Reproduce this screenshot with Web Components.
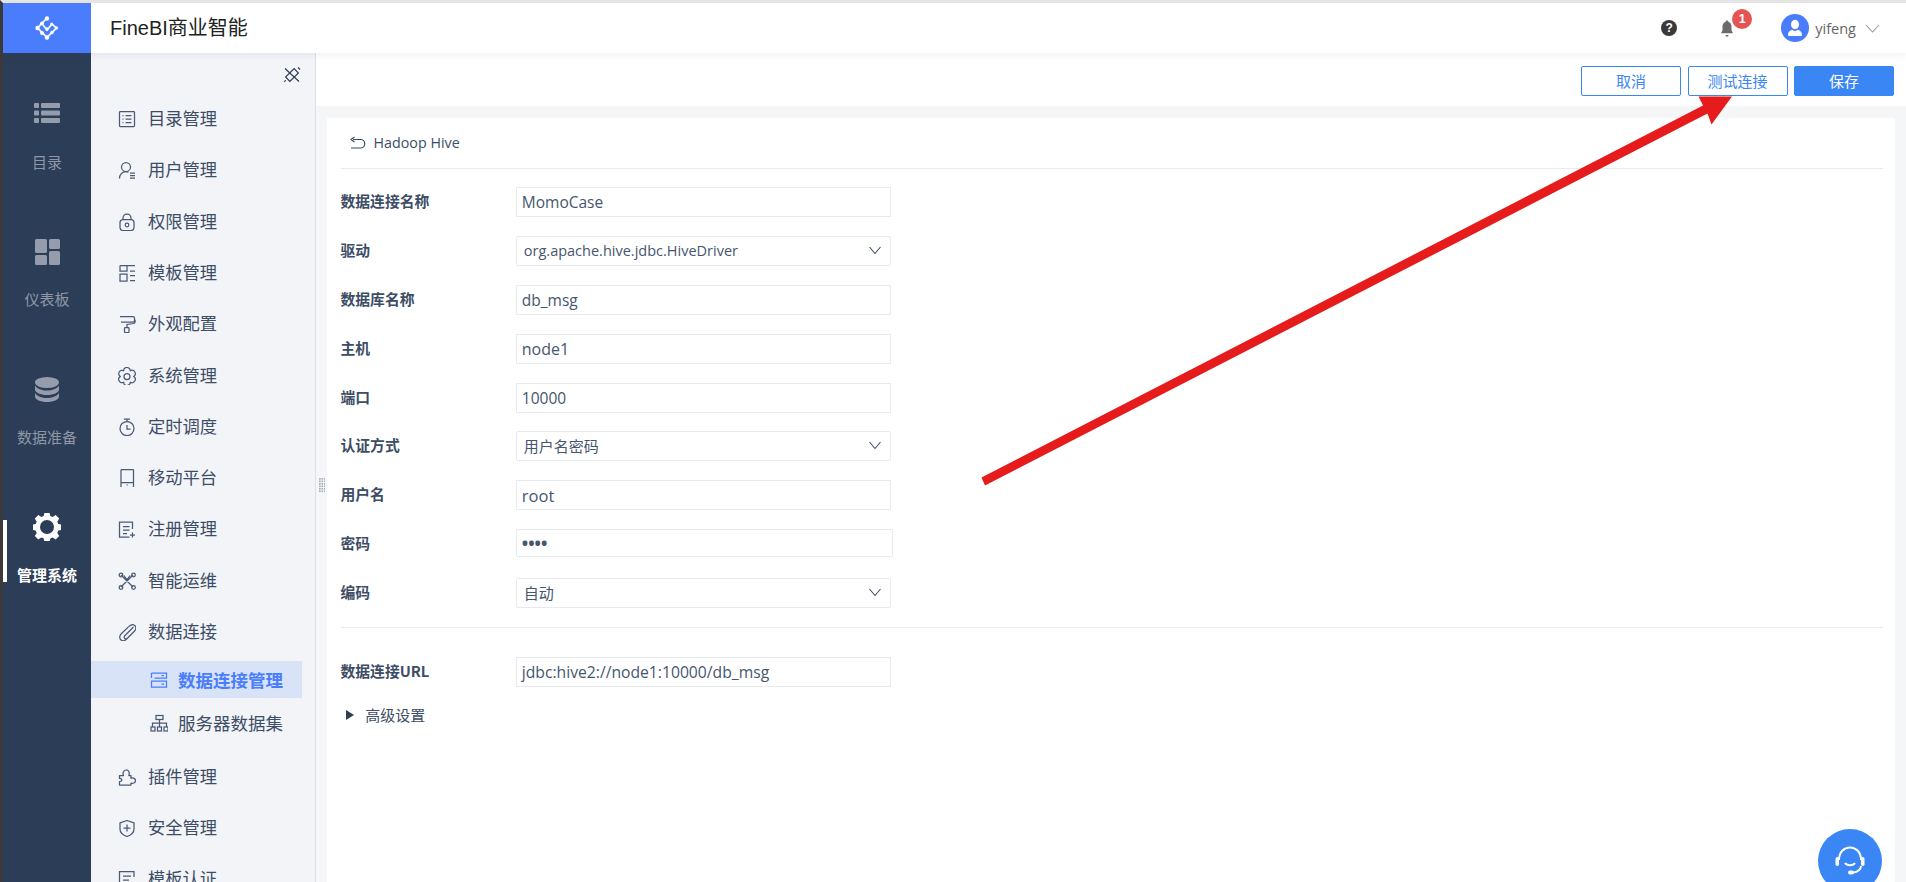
<!DOCTYPE html>
<html lang="zh"><head><meta charset="utf-8"><title>FineBI</title>
<style>
html,body{margin:0;height:100%;overflow:hidden;background:#fff}
body{font-family:"Open Sans","Noto Sans CJK SC",sans-serif;color:#3d4d66}
</style></head>
<body>
<bi-app>
  <bi-header slot="header" title-text="FineBI商业智能" user="yifeng" count="1"></bi-header>
  <bi-rail slot="rail">
    <rail-item icon="list">目录</rail-item>
    <rail-item icon="dash">仪表板</rail-item>
    <rail-item icon="db">数据准备</rail-item>
    <rail-item icon="gear" active>管理系统</rail-item>
  </bi-rail>
  <bi-nav slot="nav">
    <nav-item icon="catalog">目录管理</nav-item>
    <nav-item icon="user">用户管理</nav-item>
    <nav-item icon="lock">权限管理</nav-item>
    <nav-item icon="tpl">模板管理</nav-item>
    <nav-item icon="roller">外观配置</nav-item>
    <nav-item icon="cog">系统管理</nav-item>
    <nav-item icon="timer">定时调度</nav-item>
    <nav-item icon="mobile">移动平台</nav-item>
    <nav-item icon="reg">注册管理</nav-item>
    <nav-item icon="ops">智能运维</nav-item>
    <nav-item icon="clip">数据连接</nav-item>
    <nav-sub icon="server" active>数据连接管理</nav-sub>
    <nav-sub icon="tree">服务器数据集</nav-sub>
    <nav-item icon="puzzle" style="margin-top:9px">插件管理</nav-item>
    <nav-item icon="shield">安全管理</nav-item>
    <nav-item icon="cert">模板认证</nav-item>
  </bi-nav>
  <bi-main slot="main">
    <fine-btn slot="actions">取消</fine-btn>
    <fine-btn slot="actions">测试连接</fine-btn>
    <fine-btn slot="actions" primary>保存</fine-btn>
    <conn-form slot="body" heading="Hadoop Hive">
      <form-row label="数据连接名称" value="MomoCase"></form-row>
      <form-row label="驱动" value="org.apache.hive.jdbc.HiveDriver" select fs="14.5"></form-row>
      <form-row label="数据库名称" value="db_msg"></form-row>
      <form-row label="主机" value="node1" fs="16"></form-row>
      <form-row label="端口" value="10000"></form-row>
      <form-row label="认证方式" value="用户名密码" select fs="15"></form-row>
      <form-row label="用户名" value="root" fs="16.5"></form-row>
      <form-row label="密码" value="••••" secret fs="17"></form-row>
      <form-row label="编码" value="自动" select fs="15"></form-row>
      <form-row slot="url" label="数据连接URL" value="jdbc:hive2://node1:10000/db_msg" fs="15.7"></form-row>
    </conn-form>
  </bi-main>
</bi-app>
<script>
function flower(cx,cy,r,n,lobe){let d='';for(let i=0;i<n;i++){const a=2*Math.PI*i/n-Math.PI/n-Math.PI/2,x=(cx+r*Math.cos(a)).toFixed(2),y=(cy+r*Math.sin(a)).toFixed(2);d+=(i?'A'+lobe+' '+lobe+' 0 0 1 ':'M')+x+' '+y;}return d+'A'+lobe+' '+lobe+' 0 0 1 '+(cx+r*Math.cos(-Math.PI/n-Math.PI/2)).toFixed(2)+' '+(cy+r*Math.sin(-Math.PI/n-Math.PI/2)).toFixed(2)+'z';}
const ICONS={
 list:'<g fill="currentColor"><rect x="1" y="2" width="5" height="5" rx="1"/><rect x="8" y="2" width="19" height="5" rx="1"/><rect x="1" y="9.5" width="5" height="5" rx="1"/><rect x="8" y="9.5" width="19" height="5" rx="1"/><rect x="1" y="17" width="5" height="5" rx="1"/><rect x="8" y="17" width="19" height="5" rx="1"/></g>',
 dash:'<g fill="currentColor"><rect x="2" y="1" width="12" height="14" rx="1.5"/><rect x="16" y="1" width="11" height="10" rx="1.5"/><rect x="2" y="17" width="12" height="10" rx="1.5"/><rect x="16" y="13" width="11" height="14" rx="1.5"/></g>',
 db:'<g fill="currentColor"><ellipse cx="14" cy="6.5" rx="12" ry="5.5"/><path d="M2 9.5c2 3.400 7 5 12 5s10-1.600 12-5v4c0 3-5.400 5.500-12 5.500S2 16.500 2 13.500z"/><path d="M2 17c2 3.400 7 5 12 5s10-1.600 12-5v3.500C26 23.500 20.600 26 14 26S2 23.500 2 20.500z"/></g>',
 gear:'<path fill="currentColor" fill-rule="evenodd" d="M11.500 1h5l.8 3.500 2.300 1 3.100-1.900 3.500 3.500-1.900 3.100 1 2.300 3.500.8v5l-3.500.8-1 2.300 1.900 3.100-3.500 3.500-3.100-1.900-2.300 1-.8 3.500h-5l-.8-3.500-2.300-1-3.100 1.900-3.500-3.500 1.900-3.100-1-2.300-3.500-.8v-5l3.500-.8 1-2.300-1.900-3.100 3.500-3.500 3.100 1.900 2.300-1zM14 8.500a7 7 0 1 0 0 14 7 7 0 0 0 0-14z" transform="translate(0 -1.500)"/>',
 catalog:'<rect x="1.500" y="1.500" width="15" height="15" rx=".8"/><path d="M4.500 5.500h1M7.500 5.500h6M4.500 9h1M7.500 9h6M4.500 12.500h1M7.500 12.500h6"/>',
 user:'<circle cx="8" cy="6" r="4.500"/><path d="M1.500 17.500c0-4 2.500-6.800 6.500-6.800 1 0 1.800.2 2.500.5M12 12h5M12 14.500h5M12 17h5"/>',
 lock:'<rect x="2" y="6.500" width="14" height="11" rx="3"/><path d="M5 6.500V5a4 4 0 0 1 8 0v1.500"/><circle cx="9" cy="12" r="1.800"/>',
 tpl:'<path d="M2 1.500h15M2 1.500v5.500h7V1.500M2 10h7v7H2zM12 7h5M12 11.500h5M12 16.500h5"/>',
 roller:'<path d="M2 1.500h13a1.500 1.500 0 0 1 1.500 1.500v2.500A1.500 1.500 0 0 1 15 7H3M16.500 4.500c1 1 1 3-.5 4l-7 1v3"/><rect x="6.500" y="12.500" width="4.500" height="5" rx=".8"/>',
 cog:`<path d="${flower(9,9.5,6.600,6,3.300)}" stroke-linejoin="round"/><circle cx="9" cy="9.500" r="3"/>`,
 timer:'<circle cx="9" cy="10.500" r="7"/><path d="M6 1.200h6M9 1.200V3.500M9 7v4h3.500"/>',
 mobile:'<rect x="3" y="0.500" width="12.500" height="18" rx="1"/><path d="M3 13.500h12.500M9.200 15.600v1"/>',
 reg:'<path d="M14.500 9V2H1.500v15h10M5 6.500h6.500M5 10h6.500M5 13.500h4M12 15h5M14.500 12.500v5"/>',
 ops:'<path d="M3 3l12 12M15 3L3 15M6 3.500c1 1.500 1 2 3 4M12 3.500c-1 1.500-1 2-3 4"/><circle cx="3" cy="3" r="1.800"/><circle cx="15.500" cy="3" r="1.800"/><circle cx="3" cy="15.500" r="1.800"/><circle cx="15.500" cy="15.500" r="1.800"/>',
 clip:'<path d="M15.500 4L7 12.500c-1.200 1.200-1 2.300-.4 2.900.7.700 1.900.6 3-.4l6.500-6.500c2.200-2.200 2-4.500.8-5.800-1.300-1.300-3.700-1.500-5.900.7L3.500 10.500c-2.500 2.500-2 5-.7 6.200 1.300 1.200 3.600 1.500 5.600-.5l6-6"/>',
 server:'<path d="M1.500 2h15v5H4.500M1.500 2v5M16.500 10h-15v6h15zM11.500 4.500H14M11.500 13H14"/>',
 tree:'<rect x="6" y="1.500" width="7" height="4"/><path d="M9.500 5.500V9M2.500 13V9h14v4M9.500 9v4"/><rect x="1" y="13" width="4" height="4"/><rect x="7.500" y="13" width="4" height="4"/><rect x="14" y="13" width="4" height="4"/>',
 puzzle:'<path d="M1.500 17v-3.500c2 0 2.500-1 2.200-2-.3-.9-1.200-1.200-2.200-1V7.500h4c-1-2-.5-5 2.500-5.500 2.500-.3 4 2.500 2.800 5.500h2.200v2.700c2-.8 4.500.3 4.500 2.500 0 2.300-2.500 3-4.500 2.500V17z" stroke-linejoin="round"/>',
 shield:'<path d="M9 1.500l7 2.400v6.100c0 3.500-3.500 6.300-7 7.500-3.500-1.200-7-4-7-7.500V3.900z" stroke-linejoin="round"/><path d="M5.500 9h7M9 5.500v7"/>',
 cert:'<path d="M16 7V1.500H1.500v15h8M5 6h8M5 10h6"/>'
};
function def(name,build){
  class C extends HTMLElement{
    constructor(){super();this.attachShadow({mode:'open'});}
    connectedCallback(){this.shadowRoot.innerHTML=build(this);}
  }
  customElements.define(name,C);
}
const ic=(n,s=18,vb=18)=>`<svg width="${s}" height="${s}" viewBox="0 0 ${vb} ${vb}" fill="none" stroke="currentColor" stroke-width="1.250">${ICONS[n]}</svg>`;

def('bi-app',()=>`<style>
:host{display:grid;grid-template-columns:88px 225px 1fr;grid-template-rows:50px 1fr;width:1906px;height:882px;box-sizing:border-box;border-top:3px solid #e4e4e4;border-left:3px solid #3a3a3a;overflow:hidden;position:relative;background:#fff}
::slotted([slot=header]){grid-column:1/-1}
svg.arrow{position:absolute;left:-3px;top:-3px;pointer-events:none;z-index:1}
</style><slot name="header"></slot><slot name="rail"></slot><slot name="nav"></slot><slot name="main"></slot>
<svg class="arrow" width="1906" height="882" viewBox="0 0 1906 882"><path fill="#e61b1b" d="M981.500 477.500L1703 105.500 1698.500 96.500H1732L1711.500 124.500 1707.500 113.500 985 485.500z"/></svg>`);

def('bi-header',h=>`<style>
:host{display:flex;align-items:center;height:50px;background:#fff;box-shadow:0 2px 8px rgba(60,70,90,.08);position:relative;z-index:3}
.logo{width:88px;height:50px;background:#4a7dfc;display:flex;align-items:center;justify-content:center;flex:none}
.t{margin-left:19px;font:20px/50px "Liberation Sans","Noto Sans CJK SC",sans-serif;color:#222;flex:1}
.r{display:flex;align-items:center;height:50px;color:#666}
.help{width:16px;height:16px;border-radius:50%;background:#3a3a3a;color:#fff;font:bold 12px/16px "Liberation Sans",sans-serif;text-align:center;margin-right:41px}
.bell{position:relative;width:18px;height:18px;margin-right:45px;color:#6b6b6b}
.badge{position:absolute;left:14px;top:-10px;width:20px;height:20px;border-radius:50%;background:#e65353;color:#fff;font:bold 12.500px/20px "Liberation Sans",sans-serif;text-align:center}
.av{width:28px;height:28px;border-radius:50%;background:#4a7dfc;display:flex;align-items:center;justify-content:center;margin-right:6px}
.u{font:14.500px "Open Sans",sans-serif;color:#666;margin-right:9px}
.c{margin-right:26px;display:flex}
</style>
<div class="logo"><svg width="24" height="24" viewBox="0 0 24 24" fill="none" stroke="#fff" stroke-opacity=".9" stroke-width="1.800"><path d="M12 2L2.500 12l9.500 9.500L21.500 12 17 8l-5 6-4-5"/><g fill="#fff" stroke="none"><circle cx="12" cy="2.500" r="2.200"/><circle cx="7" cy="7.500" r="2"/><circle cx="2.500" cy="12" r="2.200"/><circle cx="7" cy="17" r="2"/><circle cx="12" cy="21.500" r="2.200"/><circle cx="17" cy="16.500" r="1.700"/><circle cx="21.500" cy="12" r="1.800" fill-opacity=".75"/><circle cx="16.500" cy="8" r="1.600" fill-opacity=".75"/><circle cx="12" cy="13" r="1.700"/></g></svg></div>
<div class="t">${h.getAttribute('title-text')}</div>
<div class="r"><div class="help">?</div>
<div class="bell"><svg width="18" height="18" viewBox="0 0 18 18" fill="currentColor"><path d="M9 1.500c.8 0 1.200.5 1.300 1.300 2.300.7 3.200 2.700 3.200 5v3.500l1.500 3H3l1.500-3V7.800c0-2.300 1-4.300 3.200-5 .1-.8.500-1.300 1.300-1.300z"/><rect x="7.500" y="16" width="3" height="1.500" rx=".7"/></svg><div class="badge">${h.getAttribute('count')}</div></div>
<div class="av"><svg width="16" height="18" viewBox="0 0 16 18" fill="#fff"><ellipse cx="8" cy="5.500" rx="4" ry="4.700"/><path d="M1 16c0-3.500 2.500-5 4.500-5.300C6.200 11.500 7 12 8 12s1.800-.5 2.500-1.300c2 .3 4.500 1.800 4.500 5.300 0 .6-.5 1-1 1H2c-.5 0-1-.4-1-1z"/></svg></div>
<div class="u">${h.getAttribute('user')}</div>
<div class="c"><svg width="15" height="9" viewBox="0 0 15 9" fill="none" stroke="#9a9a9a" stroke-width="1.100"><path d="M1 1l6.500 7L14 1"/></svg></div></div>`);

def('bi-rail',()=>`<style>:host{display:flex;flex-direction:column;background:#2c3d58;padding-top:47.500px;min-height:0;overflow:hidden}</style><slot></slot>`);
def('rail-item',e=>{const a=e.hasAttribute('active');return `<style>
:host{display:flex;flex-direction:column;align-items:center;height:137.600px;position:relative;flex:none;color:${a?'#fff':'#959cab'}}
.i{height:28px;margin-bottom:${a?23:22}px;display:flex}
.l{font:${a?'bold ':''}15px/21px "Noto Sans CJK SC",sans-serif;white-space:nowrap;color:${a?'#fff':'#8e97a6'}}
${a?'.b{position:absolute;left:0;top:7px;width:4px;height:62px;background:#fff}':''}
</style>${a?'<div class="b"></div>':''}<div class="i">${ic(e.getAttribute('icon'),28,28).replace('stroke="currentColor"','stroke="none"')}</div><div class="l"><slot></slot></div>`});

def('bi-nav',()=>`<style>
:host{display:block;background:#f2f4f8;border-right:1px solid #dde0e6;min-height:0;overflow:hidden;position:relative;z-index:1}
.pin{height:39.400px;display:flex;justify-content:flex-end;align-items:flex-start;box-sizing:border-box;padding:13px 14px 0 0;color:#2f3d55}
</style><div class="pin"><svg width="18" height="18" viewBox="0 0 18 18" fill="none" stroke="currentColor" stroke-width="1.200"><rect x="3" y="6" width="12" height="6" transform="rotate(-45 9 9)"/><path d="M2 2.500l14 13M1 15.500l2-1M15 1.500l2 2"/></svg></div><slot></slot>`);
def('nav-item',e=>`<style>
:host{display:flex;align-items:center;height:51.300px;padding-left:27px;color:#3d4d66}
.i{width:18px;height:18px;display:flex;margin-right:12px;flex:none;color:#4a5a75;transform:translateY(1px)}
.l{font:17.300px/24px "Noto Sans CJK SC",sans-serif;white-space:nowrap}
</style><div class="i">${ic(e.getAttribute('icon'))}</div><div class="l"><slot></slot></div>`);
def('nav-sub',e=>{const a=e.hasAttribute('active');return `<style>
:host{display:flex;align-items:center;width:211px;height:37px;box-sizing:border-box;padding-left:59px;margin-top:${a?'4.600px':'6px'};color:${a?'#4a7dfc':'#3d4d66'};background:${a?'#d8e3f8':'transparent'}}
.i{width:20px;height:18px;display:flex;margin-right:8px;flex:none;color:${a?'#4a7dfc':'#4a5a75'}}
.l{font:${a?'bold ':''}17.500px/24px "Noto Sans CJK SC",sans-serif;white-space:nowrap}
</style><div class="i">${ic(e.getAttribute('icon'))}</div><div class="l"><slot></slot></div>`});

def('bi-main',()=>`<style>
:host{display:flex;flex-direction:column;min-width:0;min-height:0;background:#f5f6f8;position:relative}
.bar{height:53px;flex:none;background:#fff;display:flex;justify-content:flex-end;align-items:flex-start;gap:6.500px;padding:13px 12px 0 0;box-sizing:border-box}
.body{flex:1;padding:12px 11px 0 11px;min-height:0;display:flex}
.grip{position:absolute;left:3px;top:425px;width:6px;height:15px;background-image:radial-gradient(circle at 1px 1px,#a9afba 0 .9px,transparent 1px);background-size:2.500px 2.500px}
.fab{position:absolute;right:24.500px;bottom:-11px;width:64px;height:64px;border-radius:50%;background:#3a86f5;display:flex;align-items:center;justify-content:center}
</style><div class="bar"><slot name="actions"></slot></div><div class="body"><slot name="body"></slot></div><div class="grip"></div>
<div class="fab"><svg width="38" height="38" viewBox="0 0 38 38" fill="none" stroke="#fff" stroke-width="2"><path d="M8 18c0-8 5-12.500 11-12.500S30 10 30 18M30 24c0 3-3 6-8 6.500"/><rect x="4.500" y="15" width="3.500" height="9" rx="1.700" fill="#fff" stroke="none"/><rect x="30" y="15" width="3.500" height="9" rx="1.700" fill="#fff" stroke="none"/><path d="M14 21c2 3 8 3 10 0"/><rect x="17" y="28.500" width="6" height="4" rx="2" fill="#fff" stroke="none"/></svg></div>`);

def('fine-btn',e=>{const p=e.hasAttribute('primary');return `<style>
:host{display:flex;align-items:center;justify-content:center;width:100px;height:30px;box-sizing:border-box;padding-bottom:2px;border:1px solid #3a86f5;border-radius:2px;background:${p?'#3a86f5':'#fff'};color:${p?'#fff':'#3a86f5'};font:15px "Noto Sans CJK SC",sans-serif;position:relative;z-index:2}
</style><slot></slot>`});

def('conn-form',e=>`<style>
:host{display:block;flex:1;background:#fff;padding:0 12px 0 13.500px;box-sizing:border-box;color:#3d4d66}
.h{height:51px;box-sizing:border-box;border-bottom:1px solid #e9ebee;display:flex;align-items:center;padding:0 0 1px 8px;font:14.300px "Open Sans","Noto Sans CJK SC",sans-serif;gap:8px}
.rows{display:flex;flex-direction:column;gap:18.900px;padding-top:18px}
.sep{height:1px;background:#e9ebee;margin:19px 0 28.500px}
.adv{display:flex;align-items:center;margin:16px 0 0 5.700px;font:15px/24px "Noto Sans CJK SC",sans-serif;gap:11px}
</style><div class="h"><svg width="17" height="14" viewBox="0 0 17 14" fill="none" stroke="#3d4d66" stroke-width="1.200"><path d="M4 3.500h7.500a4.200 4.200 0 0 1 0 8.500H2M5.500 1L2 3.500 5.500 6"/></svg>${e.getAttribute('heading')}</div>
<div class="rows"><slot></slot></div><div class="sep"></div><slot name="url"></slot>
<div class="adv"><svg width="8" height="10" viewBox="0 0 8 10" fill="#2f3d55"><path d="M0 0l8 5-8 5z"/></svg>高级设置</div>`);

def('form-row',e=>{const s=e.hasAttribute('select'),x=e.hasAttribute('secret'),fs=e.getAttribute('fs')||'15.5';return `<style>
:host{display:flex;align-items:flex-start;height:30px}
.l{width:175.300px;flex:none;font:bold 14.800px/28px "Noto Sans CJK SC",sans-serif;color:#3d4d66;white-space:nowrap}
.f{width:${x?377:375}px;height:${x?28:30}px;box-sizing:border-box;border:1px solid #e8eaed;${s||x?'border-radius:2px;':''}display:flex;align-items:center;justify-content:space-between;padding:0 8px ${s?1:0}px ${s?7:5}px;font:${x?'bold ':''}${fs}px "Open Sans","Noto Sans CJK SC",sans-serif;color:#46566f;background:#fff;white-space:nowrap}
</style><div class="l">${e.getAttribute('label')}</div><div class="f"><span>${e.getAttribute('value')}</span>${s?'<svg width="14" height="9" viewBox="0 0 14 9" fill="none" stroke="#3d4d66" stroke-width="1.100"><path d="M1.500 1L7 7.500 12.500 1"/></svg>':''}</div>`});
</script>
</body></html>
